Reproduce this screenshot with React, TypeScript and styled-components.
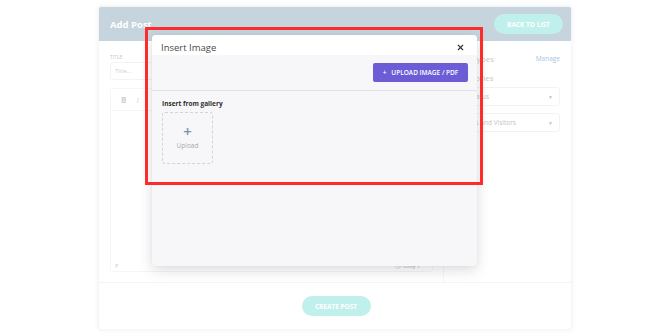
import React from "react";
import styled, { createGlobalStyle } from "styled-components";
import { X, Clock } from "lucide-react";

const GlobalStyle = createGlobalStyle`
  html, body {
    margin: 0;
    padding: 0;
    background: #ffffff;
    font-family: "Open Sans", "Liberation Sans", sans-serif;
  }
  * {
    box-sizing: border-box;
  }
`;

const Page = styled.div`
  position: relative;
  width: 670px;
  height: 335px;
  overflow: hidden;
  padding: 6px 98px 5px 98px;
  background: #ffffff;
`;

const Card = styled.div`
  display: flex;
  flex-direction: column;
  height: 100%;
  background: #ffffff;
  border-radius: 3px;
  box-shadow: 0 0 6px rgba(0, 0, 0, 0.05);
  border: 1px solid #f5f5f5;
  overflow: hidden;
`;

const CardHeader = styled.div`
  display: flex;
  align-items: center;
  justify-content: space-between;
  height: 34px;
  padding: 0 8px 0 11px;
  background: #c6d4dd;
  flex-shrink: 0;
`;

const HeaderTitle = styled.div`
  color: #ffffff;
  font-weight: 700;
  font-size: 9.5px;
`;

const PillButton = styled.button<{ $width: number }>`
  width: ${(p) => p.$width}px;
  height: 20px;
  border: none;
  border-radius: 10px;
  background: #bff0eb;
  color: #ffffff;
  font-family: inherit;
  font-weight: 700;
  font-size: 6.5px;
  text-transform: uppercase;
  padding: 0;
`;

const CardBody = styled.div`
  display: flex;
  flex: 1;
  min-height: 0;
`;

const LeftColumn = styled.div`
  width: 344px;
  padding: 12px 10px 0 11px;
  display: flex;
  flex-direction: column;
`;

const RightColumn = styled.div`
  flex: 1;
  border-left: 1px solid #f6f6f6;
  padding: 12px 11px 0 10px;
  display: flex;
  flex-direction: column;
`;

const FieldLabel = styled.div`
  font-size: 5px;
  color: #c9c9c9;
  text-transform: uppercase;
  height: 9px;
  line-height: 9px;
`;

const TextInput = styled.div`
  height: 18px;
  border: 1px solid #f3f3f3;
  border-radius: 3px;
  padding-left: 4px;
  display: flex;
  align-items: center;
  font-size: 6px;
  color: #cfcfcf;
`;

const Editor = styled.div`
  margin-top: 8px;
  height: 184px;
  border: 1px solid #f5f5f5;
  border-radius: 3px;
  display: flex;
  flex-direction: column;
`;

const Toolbar = styled.div`
  height: 22px;
  display: flex;
  align-items: center;
  gap: 10px;
  padding-left: 10px;
  border-bottom: 1px solid #f5f5f5;
  font-size: 8px;
  color: #cfcfcf;
`;

const ToolButton = styled.span<{ $italic?: boolean }>`
  font-weight: ${(p) => (p.$italic ? 400 : 700)};
  font-style: ${(p) => (p.$italic ? "italic" : "normal")};
`;

const EditorContent = styled.div`
  flex: 1;
`;

const StatusBar = styled.div`
  height: 11px;
  display: flex;
  align-items: center;
  justify-content: space-between;
  padding: 0 12px 0 4px;
  font-size: 5.5px;
  color: #d0d0d0;
`;

const StatusRight = styled.div`
  display: flex;
  align-items: center;
  gap: 2px;
  font-weight: 700;
`;

const SideRow = styled.div`
  display: flex;
  justify-content: space-between;
  align-items: center;
  height: 10px;
  font-size: 8px;
  color: #c9c9c9;
`;

const ManageLink = styled.span`
  font-size: 6.5px;
  color: #a9c4e6;
`;

const SideLabel = styled.div`
  margin-top: 10px;
  height: 10px;
  line-height: 10px;
  font-size: 8px;
  color: #c9c9c9;
`;

const Select = styled.div<{ $top: number }>`
  margin-top: ${(p) => p.$top}px;
  height: 19px;
  border: 1px solid #f3f3f3;
  border-radius: 3px;
  padding: 0 6px;
  display: flex;
  align-items: center;
  justify-content: space-between;
  font-size: 6.5px;
  color: #c4c4c4;
`;

const Caret = styled.span`
  font-size: 5px;
  color: #c4c4c4;
`;

const CardFooter = styled.div`
  height: 47px;
  flex-shrink: 0;
  border-top: 1px solid #f4f4f4;
  display: flex;
  align-items: center;
  justify-content: center;
  padding-left: 2px;
`;

const Modal = styled.div`
  position: absolute;
  left: 152px;
  top: 35px;
  width: 325px;
  height: 231px;
  border-radius: 4px;
  overflow: hidden;
  background: #f7f7f9;
  box-shadow: 0 4px 14px rgba(0, 0, 0, 0.14), 0 0 3px rgba(0, 0, 0, 0.04);
  display: flex;
  flex-direction: column;
`;

const ModalHeader = styled.div`
  height: 20px;
  background: #ffffff;
  display: flex;
  align-items: center;
  justify-content: space-between;
  padding: 4px 12px 0 9px;
`;

const ModalTitle = styled.div`
  font-size: 9.5px;
  color: #4a4a4a;
`;

const UploadBar = styled.div`
  height: 36px;
  display: flex;
  justify-content: flex-end;
  padding: 8px 9px 0 0;
  border-bottom: 1px solid #e1e1e5;
`;

const UploadButton = styled.button`
  width: 95px;
  height: 19px;
  border: none;
  border-radius: 2px;
  background: #6c5cd6;
  color: #ffffff;
  font-family: inherit;
  font-size: 6.5px;
  font-weight: 600;
  display: flex;
  align-items: center;
  justify-content: center;
  gap: 5px;
  padding: 0;
`;

const Gallery = styled.div`
  padding: 8px 10px;
  display: flex;
  flex-direction: column;
  gap: 4px;
`;

const GalleryTitle = styled.div`
  font-size: 6.5px;
  font-weight: 700;
  color: #2e2e2e;
  height: 9px;
  line-height: 9px;
`;

const UploadTile = styled.div`
  width: 51px;
  height: 52px;
  border: 1px dashed #d3d3d8;
  border-radius: 3px;
  display: flex;
  flex-direction: column;
  align-items: center;
  justify-content: center;
  padding-bottom: 2px;
`;

const TilePlus = styled.div`
  font-size: 15px;
  line-height: 13px;
  color: #7f90a3;
  font-weight: 600;
`;

const TileLabel = styled.div`
  font-size: 6.5px;
  color: #a7a9b0;
  margin-top: 3px;
`;

const Annotation = styled.div`
  position: absolute;
  left: 145px;
  top: 27px;
  width: 338px;
  height: 158px;
  border: 3px solid #ff2a2a;
  pointer-events: none;
`;

export default function App() {
  return (
    <Page>
      <GlobalStyle />
      <Card>
        <CardHeader>
          <HeaderTitle>Add Post</HeaderTitle>
          <PillButton $width={69}>Back to list</PillButton>
        </CardHeader>
        <CardBody>
          <LeftColumn>
            <FieldLabel>Title</FieldLabel>
            <TextInput>Title...</TextInput>
            <Editor>
              <Toolbar>
                <ToolButton>B</ToolButton>
                <ToolButton $italic>I</ToolButton>
              </Toolbar>
              <EditorContent />
              <StatusBar>
                <span>P</span>
                <StatusRight>
                  <Clock size={6} strokeWidth={2.5} />
                  <span>Only</span>
                  <span>/</span>
                </StatusRight>
              </StatusBar>
            </Editor>
          </LeftColumn>
          <RightColumn>
            <SideRow>
              <span>Post Types</span>
              <ManageLink>Manage</ManageLink>
            </SideRow>
            <SideLabel>Categories</SideLabel>
            <Select $top={4}>
              <span>All Status</span>
              <Caret>▼</Caret>
            </Select>
            <Select $top={7}>
              <span>Users And Visitors</span>
              <Caret>▼</Caret>
            </Select>
          </RightColumn>
        </CardBody>
        <CardFooter>
          <PillButton $width={69}>Create post</PillButton>
        </CardFooter>
      </Card>

      <Modal>
        <ModalHeader>
          <ModalTitle>Insert Image</ModalTitle>
          <X size={9} strokeWidth={3} color="#333" />
        </ModalHeader>
        <UploadBar>
          <UploadButton>
            <span>+</span>
            <span>UPLOAD IMAGE / PDF</span>
          </UploadButton>
        </UploadBar>
        <Gallery>
          <GalleryTitle>Insert from gallery</GalleryTitle>
          <UploadTile>
            <TilePlus>+</TilePlus>
            <TileLabel>Upload</TileLabel>
          </UploadTile>
        </Gallery>
      </Modal>

      <Annotation />
    </Page>
  );
}
